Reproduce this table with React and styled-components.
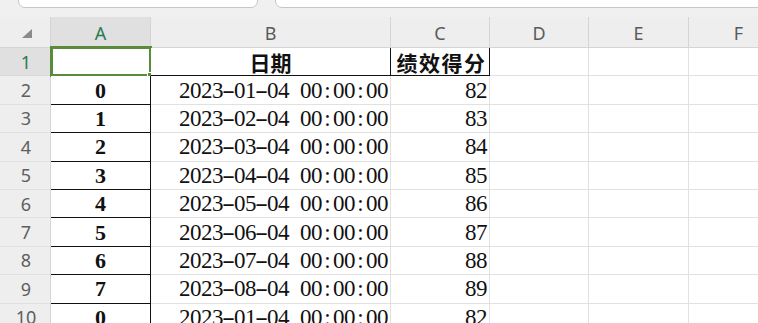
import React from "react";
import styled, { createGlobalStyle } from "styled-components";

const GlobalStyle = createGlobalStyle`
  html, body { margin: 0; padding: 0; background: #ffffff; }
  body { width: 758px; height: 323px; overflow: hidden; }
  * { box-sizing: border-box; }
`;

const GRID = "#e1e1e1";
const HEAD_LINE = "#d4d4d4";
const INK = "#111111";
const SELECT = "#5a8b3b";
const ACTIVE_TEXT = "#2b7a55";

const Window = styled.div`
  width: 758px;
  height: 323px;
  overflow: hidden;
  background: #ffffff;
  display: flex;
  flex-direction: column;
`;

const InputStrip = styled.div`
  flex: none;
  height: 17px;
  background: #f0f0f0;
  display: flex;
  align-items: flex-end;
  gap: 17px;
  padding: 0 0 9px 18px;
  overflow: hidden;
`;

const InputBox = styled.div`
  flex: ${(p) => (p.$grow ? "1 0 auto" : "none")};
  width: ${(p) => (p.$grow ? "auto" : "240px")};
  margin-right: ${(p) => (p.$grow ? "-20px" : "0")};
  height: 30px;
  background: #ffffff;
  border: 1px solid #c6c6c6;
  border-radius: 7px;
`;

const Sheet = styled.div`
  display: grid;
  grid-template-columns: 51px 100px 240px 99px 99px 100px 100px;
  grid-template-rows: 31px;
  grid-auto-rows: 28.4px;
`;

const Corner = styled.div`
  background: #eeeeee;
  border-right: 1px solid ${HEAD_LINE};
  border-bottom: 1px solid ${HEAD_LINE};
  display: flex;
  align-items: flex-end;
  padding: 0 0 9px 22px;
`;

const ColHead = styled.div`
  background: ${(p) => (p.$active ? "#e0e0e0" : "#eeeeee")};
  color: ${(p) => (p.$active ? ACTIVE_TEXT : "#5a5a5a")};
  border-right: 1px solid ${HEAD_LINE};
  border-bottom: 1px solid ${HEAD_LINE};
  display: flex;
  align-items: center;
  justify-content: center;
  font-family: "Noto Sans", "Liberation Sans", sans-serif;
  font-size: 18px;
  padding-top: 1px;
`;

const RowHead = styled.div`
  background: ${(p) => (p.$active ? "#e0e0e0" : "#eeeeee")};
  color: ${(p) => (p.$active ? ACTIVE_TEXT : "#5e5e5e")};
  border-right: 1px solid ${HEAD_LINE};
  border-bottom: 1px solid ${(p) => (p.$active ? "#d9d9d9" : GRID)};
  display: flex;
  align-items: center;
  justify-content: center;
  font-family: "Noto Sans", "Liberation Sans", sans-serif;
  font-size: 18px;
  padding-left: 2px;
`;

const Cell = styled.div`
  position: relative;
  background: #ffffff;
  border-right: 1px solid ${(p) => (p.$boxed ? INK : GRID)};
  border-bottom: 1px solid ${(p) => (p.$boxed ? INK : GRID)};
  display: flex;
  align-items: center;
  justify-content: ${(p) => (p.$align === "right" ? "flex-end" : "center")};
  padding: 1px 2px 0 2px;
  white-space: nowrap;
  overflow: visible;
  color: ${INK};
  font-family: "Liberation Serif", "Noto Sans CJK SC", serif;
  font-size: ${(p) => (p.$bold ? "22px" : "23px")};
  font-weight: ${(p) => (p.$bold ? 700 : 400)};
`;

const HeadText = styled.span`
  font-family: "Noto Sans CJK SC", sans-serif;
  font-weight: 700;
  font-size: 21px;
  letter-spacing: ${(p) => (p.$tight ? "1.5px" : "0")};
  margin-left: ${(p) => (p.$tight ? "3px" : "0")};
`;

const Mono = styled.span`
  display: inline-flex;
`;

const Glyph = styled.span`
  display: inline-block;
  width: 11px;
  text-align: center;
  transform: ${(p) => (p.$dash ? "scaleX(1.7)" : "none")};
`;

const Selection = styled.div`
  position: absolute;
  top: -2px;
  left: -1px;
  right: -2px;
  bottom: -2px;
  border: 3px solid ${SELECT};
  pointer-events: none;
`;

const FillHandle = styled.div`
  position: absolute;
  right: -5px;
  bottom: -5px;
  width: 7px;
  height: 7px;
  background: ${SELECT};
  border: 1px solid #ffffff;
`;

const MonoText = ({ text }) => (
  <Mono>
    {[...text].map((c, i) => (
      <Glyph key={i} $dash={c === "-"}>
        {c}
      </Glyph>
    ))}
  </Mono>
);

const CornerMark = () => (
  <svg width="10" height="9" viewBox="0 0 10 9">
    <polygon points="10,0 10,9 0,9" fill="#8a8a8a" />
  </svg>
);

const columns = ["A", "B", "C", "D", "E", "F"];

const records = [
  [0, "2023-01-04 00:00:00", 82],
  [1, "2023-02-04 00:00:00", 83],
  [2, "2023-03-04 00:00:00", 84],
  [3, "2023-04-04 00:00:00", 85],
  [4, "2023-05-04 00:00:00", 86],
  [5, "2023-06-04 00:00:00", 87],
  [6, "2023-07-04 00:00:00", 88],
  [7, "2023-08-04 00:00:00", 89],
  [0, "2023-01-04 00:00:00", 82],
];

export default function App() {
  return (
    <Window>
      <GlobalStyle />
      <InputStrip>
        <InputBox />
        <InputBox $grow />
      </InputStrip>
      <Sheet>
        <Corner>
          <CornerMark />
        </Corner>
        {columns.map((c) => (
          <ColHead key={c} $active={c === "A"}>
            {c}
          </ColHead>
        ))}

        <RowHead $active>1</RowHead>
        <Cell $boxed>
          <Selection>
            <FillHandle />
          </Selection>
        </Cell>
        <Cell $boxed>
          <HeadText>日期</HeadText>
        </Cell>
        <Cell $boxed>
          <HeadText $tight>绩效得分</HeadText>
        </Cell>
        <Cell />
        <Cell />
        <Cell />

        {records.map(([idx, date, score], r) => (
          <React.Fragment key={r}>
            <RowHead>{r + 2}</RowHead>
            <Cell $boxed $bold>
              {idx}
            </Cell>
            <Cell $align="right">
              <MonoText text={date} />
            </Cell>
            <Cell $align="right">
              <MonoText text={String(score)} />
            </Cell>
            <Cell />
            <Cell />
            <Cell />
          </React.Fragment>
        ))}
      </Sheet>
    </Window>
  );
}
